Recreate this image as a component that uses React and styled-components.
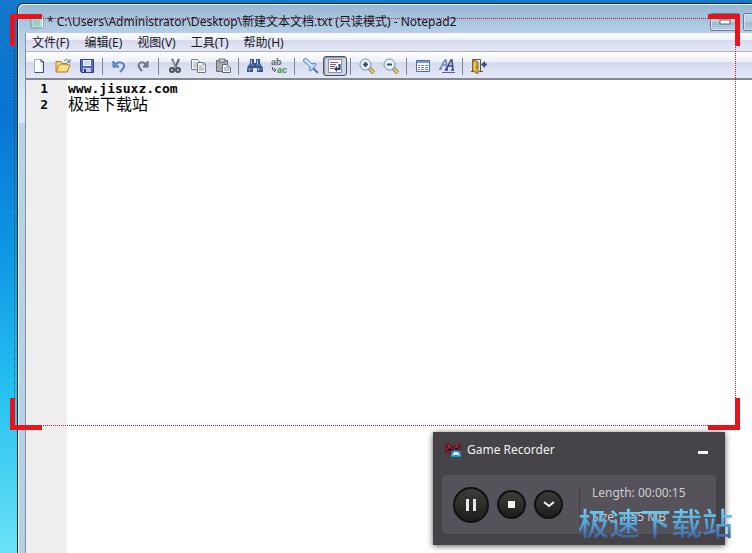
import React, { useState } from "react";
import styled, { createGlobalStyle } from "styled-components";

const GlobalStyle = createGlobalStyle`
  * {
    box-sizing: border-box;
  }
  body {
    margin: 0;
    overflow: hidden;
    font-family: "Noto Sans", "Noto Sans CJK SC", sans-serif;
    font-size: 12px;
  }
  button {
    font: inherit;
    color: inherit;
    padding: 0;
    border: 0;
    background: none;
  }
`;

const Desktop = styled.main`
  position: relative;
  display: flex;
  min-height: 100vh;
  padding: 3px 0 0 17px;
  overflow: hidden;
  background: linear-gradient(
    #1478cb 0%,
    #0b74d2 20%,
    #0d96e2 45%,
    #25c0f0 70%,
    #69e2f7 100%
  );
`;

/* the notepad window runs past the right and bottom edges of the desktop */
const Window = styled.section`
  flex: 1;
  display: flex;
  flex-direction: column;
  margin-right: -25px;
  padding: 0 7px;
  border: 1px solid #16202c;
  border-bottom: 0;
  border-radius: 6px 6px 0 0;
  box-shadow: inset 1px 1px 0 #e4f2fb;
  background: linear-gradient(
    #99b7d3,
    #b6cfe7 30px,
    #d9e6f3 90px,
    #d9e6f3 119px,
    #b8d2e7 119px,
    #b8d0e5
  );
`;

const TitleBar = styled.header`
  display: flex;
  align-items: center;
  height: 29px;
  padding: 7px 0 0 4px;
  gap: 2px;
  h1 {
    flex: 1;
    margin: 0;
    font-size: 12px;
    line-height: 20px;
    font-weight: 400;
    white-space: nowrap;
    color: #10151c;
  }
`;

const CaptionButtons = styled.div`
  display: flex;
  gap: 3px;
  height: 18px;
`;

const CaptionButton = styled.button`
  display: flex;
  justify-content: center;
  align-items: center;
  width: ${({ $width }) => $width};
  border: 1px solid #697f99;
  border-radius: 2px;
  box-shadow: inset 0 0 0 1px #d3e3f2;
  background: linear-gradient(#bed2e6 50%, #9fb9d3 50%, #b6cde4);
`;

const Client = styled.div`
  flex: 1;
  display: flex;
  flex-direction: column;
  border-left: 1px solid #858da3;
  background: white;
`;

const MenuBar = styled.nav`
  display: flex;
  align-items: center;
  gap: 15px;
  height: 19px;
  padding: 2px 0 0 6px;
  border-bottom: 1px solid #aeb1c3;
  background: linear-gradient(#fdfdfe, #eef0f8 7px, #d6dbee 7px, #e4e7f6);
  button {
    line-height: 16px;
    color: #16181d;
    white-space: nowrap;
  }
`;

const ToolBar = styled.div`
  display: flex;
  align-items: center;
  height: 28px;
  padding: 2px 0 0 1px;
  border-bottom: 2px solid #85888f;
  background: linear-gradient(#fefefe, #eef0f9 10px, #d5daee 10px, #e3e8f8);
`;

const ToolButton = styled.button`
  display: flex;
  justify-content: center;
  align-items: center;
  width: 24px;
  height: 20px;
  border-radius: 3px;
  border: 1px solid ${({ $pressed }) => ($pressed ? "#51565e" : "transparent")};
  background: ${({ $pressed }) => ($pressed ? "#ced4e1" : "transparent")};
  box-shadow: ${({ $pressed }) =>
    $pressed ? "inset 1px 1px 1px #8c939f" : "none"};
`;

const Separator = styled.span`
  width: 8px;
  height: 17px;
  &::before {
    content: "";
    display: block;
    width: 1px;
    height: 100%;
    margin-left: 3px;
    background: #80859a;
  }
`;

const Editor = styled.div`
  flex: 1;
  display: flex;
  font-weight: 700;
  font-size: 13px;
  line-height: 16px;
  font-family: "DejaVu Sans Mono", "Noto Sans CJK SC", monospace;
  color: #050505;
`;

const Gutter = styled.div`
  width: 41px;
  padding: 1px 19px 0 0;
  text-align: right;
  background: #eeeeee;
`;

const Document = styled.div`
  flex: 1;
  padding: 1px;
  outline: none;
`;

const Line = styled.div`
  height: 16px;
  font-size: ${({ $wide }) => ($wide ? "16px" : "13px")};
  font-weight: ${({ $wide }) => ($wide ? 400 : 700)};
`;

const CaptureFrame = styled.div`
  position: absolute;
  inset: 14px 12px 123px 10px;
  pointer-events: none;
  &::before {
    content: "";
    position: absolute;
    inset: 4px;
    border: 1px dotted #c41a3a;
    border-left-color: #24405c;
  }
`;

const Corner = styled.span`
  position: absolute;
  width: 32px;
  height: 32px;
  ${({ $side }) => $side}: 0;
  ${({ $edge }) => $edge}: 0;
  border: 0 solid #e9131b;
  border-${({ $side }) => $side}-width: 5px;
  border-${({ $edge }) => $edge}-width: 5px;
`;

const Recorder = styled.aside`
  position: absolute;
  right: 27px;
  bottom: 8px;
  width: 292px;
  padding: 0 9px 11px;
  background: #454348;
  box-shadow: 0 1px 6px rgba(0, 0, 0, 0.65);
  color: #f1f1f3;
`;

const RecorderTitle = styled.header`
  display: flex;
  align-items: center;
  gap: 6px;
  height: 43px;
  padding: 0 8px 8px 3px;
  h2 {
    flex: 1;
    margin: 0;
    font-size: 12px;
    line-height: 16px;
    font-weight: 400;
  }
`;

const MinimizeButton = styled.button`
  width: 10px;
  height: 8px;
  border-bottom: 3px solid #f7f7f9;
`;

const RecorderPanel = styled.div`
  display: flex;
  align-items: center;
  gap: 8px;
  height: 59px;
  padding-left: 11px;
  border-radius: 4px;
  background: #555259;
`;

const RoundButton = styled.button`
  display: flex;
  justify-content: center;
  align-items: center;
  width: ${({ $size }) => $size};
  height: ${({ $size }) => $size};
  border: 2px solid #111112;
  border-radius: 50%;
  background: linear-gradient(#3c3d38, #1d1e1c);
`;

const Stats = styled.div`
  display: flex;
  flex-direction: column;
  justify-content: center;
  gap: 8px;
  height: 38px;
  margin-left: 8px;
  padding-left: 12px;
  border-left: 1px solid #403e44;
  line-height: 16px;
  white-space: nowrap;
  color: #cfcdd2;
`;

const Watermark = styled.div`
  position: absolute;
  right: 19px;
  bottom: 12px;
  font-family: "Noto Sans CJK SC", sans-serif;
  font-size: 31px;
  font-weight: 500;
  line-height: 38px;
  color: transparent;
  background: linear-gradient(#72cff0 15%, #55a5dc 55%, #4263a2 90%);
  background-clip: text;
  pointer-events: none;
`;

const Icon = ({ children, size = 16 }) => (
  <svg
    width={size}
    height={size}
    viewBox="0 0 16 16"
    fill="none"
    aria-hidden="true"
  >
    {children}
  </svg>
);

const NotepadIcon = () => (
  <Icon>
    <path d="M3 2h11v12H2V4z" fill="#b7dfdc" stroke="#75939d" />
    <path d="M3 3h9v2H3z" fill="#e5f5ef" />
    <path d="M4 7h7M4 9h7M4 11h7" stroke="#7ebcc0" />
    <path d="M13.5 3v11" stroke="#eef7fa" />
  </Icon>
);

const NewIcon = () => (
  <Icon>
    <path d="M3 1h7l3 3v11H3z" fill="#fbfdff" />
    <path d="M3.5 14V1.5H10" stroke="#9eacbf" />
    <path d="M10 1.5L12.5 4v10.5h-9M10 1.5V4h3" stroke="#434e65" />
    <path d="M11 6v7" stroke="#c5d4e8" />
  </Icon>
);

const OpenIcon = () => (
  <Icon>
    <path d="M1 13.5v-10h5l1 2h5v3" fill="#f5ce6d" stroke="#ad822d" />
    <path d="M1 14l3-7h11l-3 7z" fill="#ffdd80" stroke="#ad7b21" />
    <path d="M4 8h9" stroke="#fff0b3" />
    <path d="M9 3c2-2 4-2 5 1" stroke="#596f8e" />
    <path d="M12 4h3V1" stroke="#596f8e" />
  </Icon>
);

const SaveIcon = () => (
  <Icon>
    <path d="M1.5 1.5h13v13h-12l-1-1z" fill="#5368c5" stroke="#323e91" />
    <path d="M4 2h8v6H4z" fill="#eef5ff" />
    <path d="M5 4h6M5 6h6" stroke="#a9bfdf" />
    <path d="M4 10h8v4H4z" fill="#c3cbe0" />
    <path d="M5 11h2v3H5z" fill="#333b71" />
  </Icon>
);

const UndoIcon = () => (
  <Icon>
    <path d="M4 7c4-5 10-2 9 2-1 2-2 3-4 5" stroke="#527ec5" strokeWidth="2" />
    <path d="M2 3v6h6z" fill="#6997db" stroke="#466eaf" />
  </Icon>
);

const RedoIcon = () => (
  <Icon>
    <path d="M11 7C8 2 2 5 4 9c1 2 2 3 3 4" stroke="#707780" strokeWidth="2" />
    <path d="M13 3v6H8z" fill="#858b92" stroke="#5f666f" />
  </Icon>
);

const CutIcon = () => (
  <Icon>
    <path d="M5 1l4 9M12 1L8 10" stroke="#596473" strokeWidth="2" />
    <path d="M5 2l4 8" stroke="#b8c2cd" />
    <circle cx="5" cy="12" r="2" stroke="#4b5159" strokeWidth="2" />
    <circle cx="11" cy="12" r="2" stroke="#4b5159" strokeWidth="2" />
  </Icon>
);

const CopyIcon = () => (
  <Icon>
    <path d="M0.5 1.5h6l2 2v8h-8z" fill="#f7f8fa" stroke="#777e8a" />
    <path d="M2 5h4M2 7h4M2 9h4" stroke="#a1a8b5" />
    <path d="M6.500 4.500h6l2 2v8h-8z" fill="#f8f9fb" stroke="#727985" />
    <path d="M12 4.500V7h3M8 8h3M8 10h5M8 12h5" stroke="#8c939e" />
  </Icon>
);

const PasteIcon = () => (
  <Icon>
    <path d="M1.5 2.5h11v11h-11z" fill="#a7a9ad" stroke="#686d74" />
    <path d="M4 1h6v3H4z" fill="#d5d9df" stroke="#666c75" />
    <path d="M7.5 6.5h5l3 3v5h-8z" fill="#f8f9fa" stroke="#636a75" />
    <path d="M12 6v4h3M9 10h2M9 12h5" stroke="#858d99" />
  </Icon>
);

const FindIcon = () => (
  <Icon>
    <path d="M3 1h4v4h2V1h4v4l3 5v4h-6v-4H6v4H0v-4l3-5z" fill="#385590" />
    <path d="M4 2h1v4H4zM10 2h1v4h-1zM2 10h1v3H2zM11 10h1v3h-1z" fill="#b7caea" />
    <path d="M3 7h4M9 7h4M0 11h6M10 11h6" stroke="#6f91c4" />
  </Icon>
);

const ReplaceIcon = () => (
  <Icon>
    <text
      x="0"
      y="7"
      fontFamily="Liberation Sans"
      fontSize="9"
      fontWeight="700"
      fill="#606b65"
    >
      ab
    </text>
    <text
      x="6"
      y="15"
      fontFamily="Liberation Sans"
      fontSize="9"
      fontWeight="700"
      fill="#3d9443"
    >
      ac
    </text>
    <path d="M1.5 9v3H5M3 10l2 2-2 2" stroke="#596170" />
  </Icon>
);

const PinIcon = () => (
  <Icon>
    <path d="M9 9l6 6" stroke="#697380" strokeWidth="2" />
    <path
      d="M0 2l3-2 3 3 3 3 3-1 1 2-5 6-2-1 1-3-3-3-3-2z"
      fill="#b7d7f7"
      stroke="#5b91cf"
    />
    <path d="M3 2l3 4 3 2" stroke="#eff8ff" />
  </Icon>
);

const WrapIcon = () => (
  <Icon>
    <path d="M1.5 1.5h13v13h-13z" fill="#fbfcff" stroke="#7e91ba" />
    <path d="M3 4.5h8M3 6.5h6M3 8.5h5M3 10.500h4" stroke="#a05560" />
    <path d="M12.5 6v5H9" stroke="#263b8b" strokeWidth="2" />
    <path d="M10 8v6l-3-3z" fill="#263b8b" />
  </Icon>
);

const ZoomIcon = ({ plus }) => (
  <Icon>
    <path d="M10 10l5 5" stroke="#9a8148" strokeWidth="4" />
    <path d="M11 11l4 4" stroke="#e5ce75" strokeWidth="2" />
    <circle cx="6.500" cy="6.500" r="5.500" fill="#e4f3fb" stroke="#718cab" />
    <path d="M4 6.500h5" stroke="#3e4b60" strokeWidth="2" />
    {plus && <path d="M6.500 4v5" stroke="#3e4b60" strokeWidth="2" />}
  </Icon>
);

const SchemeIcon = () => (
  <Icon>
    <path d="M1.5 2.5h13v11h-13z" fill="#f7faff" stroke="#486da9" />
    <path d="M2 3h12v2H2z" fill="#709bd3" />
    <path d="M3 7.5h2M3 9.5h2M3 11.5h2" stroke="#b65f62" />
    <path
      d="M6 7.5h3M10 7.5h3M6 9.5h3M10 9.5h3M6 11.5h3M10 11.5h3"
      stroke="#6583ad"
    />
  </Icon>
);

const FontIcon = () => (
  <Icon>
    <path
      d="M1 11L6 2h1l1 9M3 7h4M0 11h3M6 11h3"
      stroke="#6a88bd"
      strokeWidth="1.5"
    />
    <path
      d="M7 12l5-10h1l1 10M9 8h5M6 12h3M12 12h3"
      stroke="#39438c"
      strokeWidth="1.5"
    />
    <path d="M3 14.5h13" stroke="#7456a2" />
  </Icon>
);

const ExitIcon = () => (
  <Icon>
    <path d="M0 13.5h3M1.5 13V1.5h8V13M8 13.5h4" stroke="#5d573a" />
    <path d="M2 2l5 2v12l-5-3z" fill="#dcae35" stroke="#806b24" />
    <path d="M3 4v8" stroke="#ffe18c" />
    <path d="M5 9h1" stroke="#524720" />
    <path d="M16 6.5h-4" stroke="#344c89" strokeWidth="2" />
    <path d="M14 3v7l-4-3.5z" fill="#344c89" />
  </Icon>
);

const RecorderIcon = () => (
  <Icon>
    <path d="M0 2l4-1 3 3h2l3-3 4 1v10H0z" fill="#541c27" />
    <path
      d="M1 3l3 1 3 3-4 4H1M15 2l-3 2-3 3 4 3M4 2v3l-3 3M11 2l1 4 3 2"
      stroke="#bb2938"
    />
    <path d="M4 7h3v2H4zM10 6h3v2h-3z" fill="#17151c" />
    <path d="M6 9h2l1-1h4l1 1h2v6H6z" fill="#218cc9" />
    <path d="M7 14l2-4h4l2 4-2-1H9z" fill="#e4f5fc" />
  </Icon>
);

const menus = ["文件(F)", "编辑(E)", "视图(V)", "工具(T)", "帮助(H)"];

const toolGroups = [
  [
    ["新建", NewIcon],
    ["打开", OpenIcon],
    ["保存", SaveIcon],
  ],
  [
    ["撤销", UndoIcon],
    ["重做", RedoIcon],
  ],
  [
    ["剪切", CutIcon],
    ["复制", CopyIcon],
    ["粘贴", PasteIcon],
  ],
  [
    ["查找", FindIcon],
    ["替换", ReplaceIcon],
  ],
  [
    ["置顶", PinIcon],
    ["自动换行", WrapIcon],
  ],
  [
    ["放大", () => <ZoomIcon plus />],
    ["缩小", () => <ZoomIcon />],
  ],
  [
    ["语法方案", SchemeIcon],
    ["字体", FontIcon],
  ],
  [["退出", ExitIcon]],
];

const lines = [
  { text: "www.jisuxz.com" },
  { text: "极速下载站", wide: true },
];

const App = () => {
  const [wrap, setWrap] = useState(true);

  return (
    <Desktop>
      <GlobalStyle />
      <Window>
        <TitleBar>
          <NotepadIcon />
          <h1>
            * C:\Users\Administrator\Desktop\新建文本文档.txt (只读模式) -
            Notepad2
          </h1>
          <CaptionButtons>
            <CaptionButton $width="30px" aria-label="最小化">
              <svg width="12" height="6">
                <rect
                  x="1"
                  y="1"
                  width="10"
                  height="4"
                  fill="#fff"
                  stroke="#57677a"
                />
              </svg>
            </CaptionButton>
            <CaptionButton $width="26px" aria-label="最大化" />
          </CaptionButtons>
        </TitleBar>
        <Client>
          <MenuBar>
            {menus.map((m) => (
              <button key={m}>{m}</button>
            ))}
          </MenuBar>
          <ToolBar>
            {toolGroups.map((group, idx) => (
              <React.Fragment key={idx}>
                {idx > 0 && <Separator />}
                {group.map(([label, Glyph]) => (
                  <ToolButton
                    key={label}
                    aria-label={label}
                    $pressed={label === "自动换行" && wrap}
                    onClick={
                      label === "自动换行" ? () => setWrap(!wrap) : undefined
                    }
                  >
                    <Glyph />
                  </ToolButton>
                ))}
              </React.Fragment>
            ))}
          </ToolBar>
          <Editor>
            <Gutter>
              {lines.map((_, idx) => (
                <Line key={idx}>{idx + 1}</Line>
              ))}
            </Gutter>
            <Document role="textbox" aria-multiline="true" aria-readonly="true">
              {lines.map((l) => (
                <Line key={l.text} $wide={l.wide}>
                  {l.text}
                </Line>
              ))}
            </Document>
          </Editor>
        </Client>
      </Window>

      <CaptureFrame>
        <Corner $side="left" $edge="top" />
        <Corner $side="right" $edge="top" />
        <Corner $side="left" $edge="bottom" />
        <Corner $side="right" $edge="bottom" />
      </CaptureFrame>

      <Recorder>
        <RecorderTitle>
          <RecorderIcon />
          <h2>Game Recorder</h2>
          <MinimizeButton aria-label="Minimize" />
        </RecorderTitle>
        <RecorderPanel>
          <RoundButton $size="36px" aria-label="Pause">
            <svg width="12" height="12" fill="#e8e8e8">
              <path d="M1 0h3v12H1zM8 0h3v12H8z" />
            </svg>
          </RoundButton>
          <RoundButton $size="29px" aria-label="Stop">
            <svg width="7" height="7">
              <rect width="7" height="7" fill="#f3f3f3" />
            </svg>
          </RoundButton>
          <RoundButton $size="29px" aria-label="More">
            <svg width="12" height="8" fill="none">
              <path d="M1 1l5 4 5-4" stroke="#f3f3f3" strokeWidth="2" />
            </svg>
          </RoundButton>
          <Stats>
            <span>Length: 00:00:15</span>
            <span>Size: 1.55 MB</span>
          </Stats>
        </RecorderPanel>
      </Recorder>
      <Watermark>极速下载站</Watermark>
    </Desktop>
  );
};

export default App;
